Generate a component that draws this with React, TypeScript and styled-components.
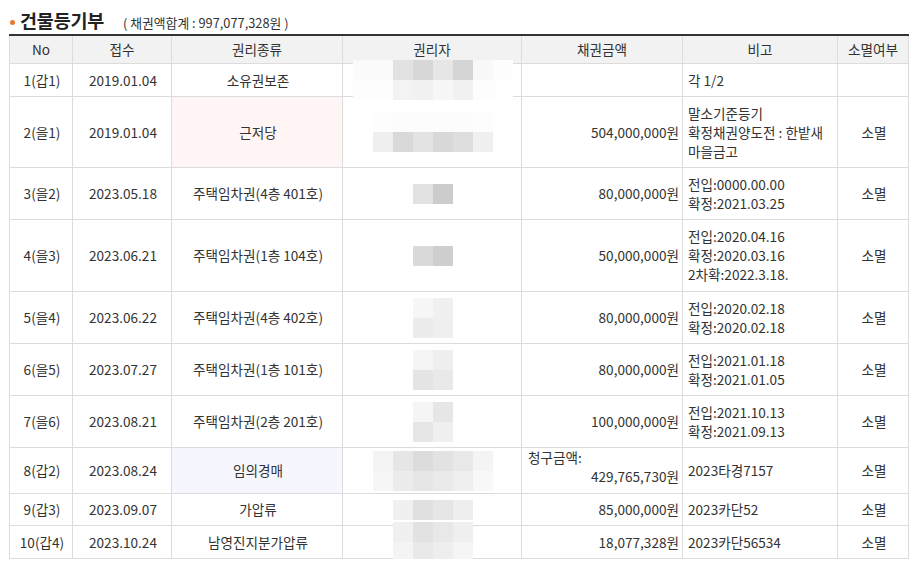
import React from 'react';
import styled, { createGlobalStyle } from 'styled-components';

const GlobalStyle = createGlobalStyle`
  html, body {
    margin: 0;
    padding: 0;
    background: #fff;
  }
  body {
    font-family: 'Noto Sans CJK KR', 'Noto Sans', sans-serif;
    color: #333;
  }
`;

type Row = {
  no: string;
  date: string;
  kind: string;
  kindTone?: 'pink' | 'blue';
  mosaic: string[][];
  amount?: string;
  claim?: boolean;
  note: string[];
  gone?: string;
  height: number;
};

const rows: Row[] = [
  {
    no: '1(갑1)',
    date: '2019.01.04',
    kind: '소유권보존',
    mosaic: [
      ['#fbfbfb', '#fafafa', '#e2e2e2', '#d7d7d7', '#e6e6e6', '#d5d5d5', '#f8f8f8', '#fdfdfd'],
      ['#fdfdfd', '#fdfdfd', '#f3f3f3', '#f1f1f1', '#f7f7f7', '#f1f1f1', '#fdfdfd', '#fefefe'],
    ],
    note: ['각 1/2'],
    height: 33,
  },
  {
    no: '2(을1)',
    date: '2019.01.04',
    kind: '근저당',
    kindTone: 'pink',
    mosaic: [
      ['#fdfdfd', '#fcfcfc', '#fcfcfc', '#fcfcfc', '#fcfcfc', '#fdfdfd'],
      ['#efefef', '#d9d9d9', '#e3e3e3', '#d8d8d8', '#dedede', '#f0f0f0'],
    ],
    amount: '504,000,000원',
    note: ['말소기준등기', '확정채권양도전 : 한밭새', '마을금고'],
    gone: '소멸',
    height: 71,
  },
  {
    no: '3(을2)',
    date: '2023.05.18',
    kind: '주택임차권(4층 401호)',
    mosaic: [['#e2e2e2', '#cccccc']],
    amount: '80,000,000원',
    note: ['전입:0000.00.00', '확정:2021.03.25'],
    gone: '소멸',
    height: 52,
  },
  {
    no: '4(을3)',
    date: '2023.06.21',
    kind: '주택임차권(1층 104호)',
    mosaic: [['#dadada', '#cfcfcf']],
    amount: '50,000,000원',
    note: ['전입:2020.04.16', '확정:2020.03.16', '2차확:2022.3.18.'],
    gone: '소멸',
    height: 72,
  },
  {
    no: '5(을4)',
    date: '2023.06.22',
    kind: '주택임차권(4층 402호)',
    mosaic: [
      ['#f7f7f7', '#f0f0f0'],
      ['#ececec', '#efefef'],
    ],
    amount: '80,000,000원',
    note: ['전입:2020.02.18', '확정:2020.02.18'],
    gone: '소멸',
    height: 52,
  },
  {
    no: '6(을5)',
    date: '2023.07.27',
    kind: '주택임차권(1층 101호)',
    mosaic: [
      ['#f5f5f5', '#eeeeee'],
      ['#e4e4e4', '#e9e9e9'],
    ],
    amount: '80,000,000원',
    note: ['전입:2021.01.18', '확정:2021.01.05'],
    gone: '소멸',
    height: 52,
  },
  {
    no: '7(을6)',
    date: '2023.08.21',
    kind: '주택임차권(2층 201호)',
    mosaic: [
      ['#f5f5f5', '#e6e6e6'],
      ['#e6e6e6', '#f0f0f0'],
    ],
    amount: '100,000,000원',
    note: ['전입:2021.10.13', '확정:2021.09.13'],
    gone: '소멸',
    height: 52,
  },
  {
    no: '8(갑2)',
    date: '2023.08.24',
    kind: '임의경매',
    kindTone: 'blue',
    mosaic: [
      ['#f4f4f4', '#e6e6e6', '#dcdcdc', '#e2e2e2', '#e8e8e8', '#f4f4f4'],
      ['#f6f6f6', '#ececec', '#e6e6e6', '#eaeaea', '#efefef', '#f8f8f8'],
    ],
    amount: '429,765,730원',
    claim: true,
    note: ['2023타경7157'],
    gone: '소멸',
    height: 46,
  },
  {
    no: '9(갑3)',
    date: '2023.09.07',
    kind: '가압류',
    mosaic: [['#f0f0f0', '#e0e0e0', '#e6e6e6', '#eeeeee']],
    amount: '85,000,000원',
    note: ['2023카단52'],
    gone: '소멸',
    height: 32,
  },
  {
    no: '10(갑4)',
    date: '2023.10.24',
    kind: '남영진지분가압류',
    mosaic: [
      ['#f0f0f0', '#e2e2e2', '#e8e8e8', '#efefef'],
      ['#f4f4f4', '#e9e9e9', '#eeeeee', '#f5f5f5'],
    ],
    amount: '18,077,328원',
    note: ['2023카단56534'],
    gone: '소멸',
    height: 33,
  },
];

const Page = styled.div`
  width: 899px;
  padding: 8px 0 0 9px;
`;

const TitleBar = styled.div`
  display: flex;
  align-items: baseline;
  height: 26px;
`;

const Bullet = styled.span`
  width: 5px;
  height: 5px;
  border-radius: 50%;
  background: #e8782d;
  margin: 0 5px 0 1px;
  align-self: center;
  transform: translateY(1px);
`;

const Title = styled.h2`
  margin: 0;
  font-size: 18.5px;
  line-height: 24px;
  font-weight: 700;
  color: #222;
  letter-spacing: -0.2px;
`;

const Sum = styled.span`
  margin-left: 19px;
  font-size: 12.8px;
  color: #333;
`;

const Table = styled.table`
  width: 899px;
  border-collapse: collapse;
  table-layout: fixed;
  border-top: 2px solid #333;
  font-size: 13.6px;
  line-height: 19px;
`;

const Head = styled.th`
  height: 27px;
  padding: 0;
  background: #f2f2f2;
  border: 1px solid #dcdcdc;
  border-top: none;
  font-weight: 400;
  color: #333;
`;

const Cell = styled.td<{ $align?: 'left' | 'right' | 'center'; $tone?: 'pink' | 'blue' }>`
  padding: 0 3px 0 5px;
  border: 1px solid #dcdcdc;
  text-align: ${(p) => p.$align || 'center'};
  vertical-align: middle;
  white-space: nowrap;
  background: ${(p) =>
    p.$tone === 'pink' ? '#fff5f5' : p.$tone === 'blue' ? '#f6f6ff' : '#fff'};
`;

const Mosaic = styled.div`
  display: flex;
  flex-direction: column;
  align-items: center;
  margin: -10px 0;
`;

const MosaicRow = styled.div`
  display: flex;
`;

const Block = styled.span<{ $c: string }>`
  width: 20px;
  height: 20px;
  background: ${(p) => p.$c};
`;

const Claim = styled.div`
  display: flex;
  flex-direction: column;
  transform: translateY(-4px);
`;

const ClaimLabel = styled.span`
  text-align: left;
  padding-left: 1px;
`;

export default function App() {
  return (
    <Page>
      <GlobalStyle />
      <TitleBar>
        <Bullet />
        <Title>건물등기부</Title>
        <Sum>( 채권액합계 : 997,077,328원 )</Sum>
      </TitleBar>
      <Table>
        <colgroup>
          <col style={{ width: 63 }} />
          <col style={{ width: 99 }} />
          <col style={{ width: 171 }} />
          <col style={{ width: 179 }} />
          <col style={{ width: 161 }} />
          <col style={{ width: 155 }} />
          <col style={{ width: 71 }} />
        </colgroup>
        <thead>
          <tr>
            <Head>No</Head>
            <Head>접수</Head>
            <Head>권리종류</Head>
            <Head>권리자</Head>
            <Head>채권금액</Head>
            <Head>비고</Head>
            <Head>소멸여부</Head>
          </tr>
        </thead>
        <tbody>
          {rows.map((r) => (
            <tr key={r.no} style={{ height: r.height }}>
              <Cell>{r.no}</Cell>
              <Cell>{r.date}</Cell>
              <Cell $tone={r.kindTone}>{r.kind}</Cell>
              <Cell>
                <Mosaic>
                  {r.mosaic.map((line, i) => (
                    <MosaicRow key={i}>
                      {line.map((c, j) => (
                        <Block key={j} $c={c} />
                      ))}
                    </MosaicRow>
                  ))}
                </Mosaic>
              </Cell>
              <Cell $align="right">
                {r.claim ? (
                  <Claim>
                    <ClaimLabel>청구금액:</ClaimLabel>
                    <span>{r.amount}</span>
                  </Claim>
                ) : (
                  r.amount
                )}
              </Cell>
              <Cell $align="left">
                {r.note.map((n, i) => (
                  <div key={i}>{n}</div>
                ))}
              </Cell>
              <Cell>{r.gone}</Cell>
            </tr>
          ))}
        </tbody>
      </Table>
    </Page>
  );
}
